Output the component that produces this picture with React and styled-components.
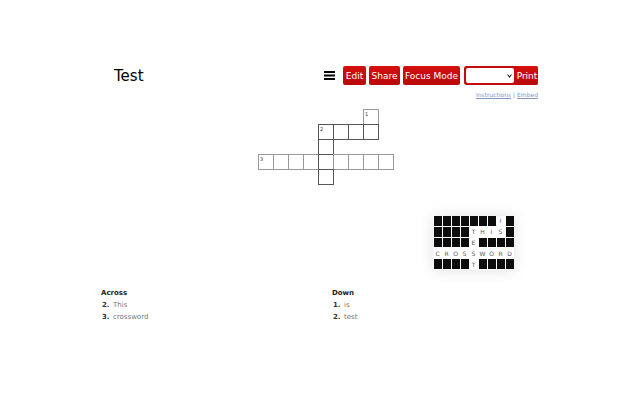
import React from "react"
import styled, {createGlobalStyle} from "styled-components"

const GlobalStyle = createGlobalStyle`
    html, body {
        margin: 0;
        background: #fff;
        font-family: "DejaVu Sans", Verdana, sans-serif;
    }
`;

const Page = styled.div`
    box-sizing: border-box;
    width: 640px;
    height: 400px;
    padding-top: 66px;
    overflow: hidden;
`;

const Header = styled.div`
    display: flex;
    align-items: center;
    height: 19px;
    padding: 0 102px 0 114px;
`;

const Title = styled.h1`
    margin: 0;
    font-size: 15px;
    font-weight: 400;
    color: #000;
    margin-right: auto;
`;

const Burger = styled.svg`
    width: 11px;
    height: 9px;
    margin-right: 8px;
`;

const Button = styled.button`
    box-sizing: border-box;
    height: 19px;
    width: ${p => p.$w}px;
    margin-right: ${p => p.$gap || 3}px;
    padding: 0;
    border: 0;
    border-radius: 2px;
    background: linear-gradient(#d40f0f, #b80a0a);
    color: #fff;
    font: 9px "DejaVu Sans", Verdana, sans-serif;
`;

const PrintGroup = styled.div`
    position: relative;
    display: flex;
    height: 19px;
    border-radius: 3px;
    background: #c40c0c;
`;

const Picker = styled.select`
    box-sizing: border-box;
    appearance: none;
    width: 52px;
    height: 19px;
    padding: 0;
    border: 2px solid #c40c0c;
    border-radius: 4px;
    background: #fff;
    font-size: 8px;
`;

const PickerArrow = styled.svg`
    position: absolute;
    top: 8px;
    left: 43px;
    width: 5px;
    height: 4px;
    pointer-events: none;
`;

const PrintButton = styled(Button)`
    margin: 0;
    border-radius: 0 2px 2px 0;
`;

const Links = styled.div`
    height: 9px;
    margin-top: 5px;
    padding-right: 102px;
    text-align: right;
    font-size: 6px;
    line-height: 9px;
    color: #888;
`;

const DocLink = styled.a`
    color: #8598c2;
    text-decoration: underline;
`;

const Board = styled.div`
    display: grid;
    grid-template-columns: repeat(9, 15px);
    grid-auto-rows: 15px;
    width: 136px;
    margin: 10px 0 0 258px;
`;

const Cell = styled.div`
    position: relative;
    box-sizing: border-box;
    width: 16px;
    height: 16px;
    grid-column: ${p => p.$col + 1};
    grid-row: ${p => p.$row + 1};
    border: 1px solid ${p => p.$dark ? "#555" : "#999"};
`;

const CellNumber = styled.span`
    position: absolute;
    top: 1px;
    left: 1px;
    font-size: 5px;
    line-height: 6px;
    color: #333;
`;

const MiniRow = styled.div`
    display: flex;
    justify-content: flex-end;
    height: 54px;
    margin-top: 32px;
    padding-right: 126px;
`;

const Mini = styled.div`
    display: grid;
    grid-template-columns: repeat(9, 9px);
    grid-auto-rows: 10.8px;
    box-shadow: 0 0 14px rgba(0, 0, 0, 0.12);
`;

const MiniCell = styled.div`
    display: flex;
    align-items: center;
    justify-content: center;
    margin: 0 ${p => p.$filled ? "0.5px" : "0"} 1px;
    background: ${p => p.$filled ? "#0c0c0c" : "#fff"};
    font-size: 6px;
    color: #555;
`;

const Clues = styled.div`
    display: flex;
    margin-top: 17px;
    padding-left: 101px;
`;

const ClueColumn = styled.div`
    width: 231px;
`;

const ClueHeading = styled.div`
    height: 12px;
    font-size: 7px;
    line-height: 12px;
    font-weight: 700;
    color: #222;
`;

const ClueRow = styled.div`
    display: flex;
    height: 12px;
    padding-left: 1px;
    font-size: 7px;
    line-height: 12px;
    color: #777;
`;

const ClueNumber = styled.span`
    width: 11px;
    font-weight: 700;
    color: #333;
`;

const cells = [
    [0, 7, "1"],
    [1, 4, "2"], [1, 5], [1, 6], [1, 7],
    [2, 4],
    [3, 0, "3"], [3, 1], [3, 2], [3, 3], [3, 4], [3, 5], [3, 6], [3, 7], [3, 8],
    [4, 4],
];

const miniRows = [
    "#######I#",
    "####THIS#",
    "####E####",
    "CROSSWORD",
    "####T####",
];

const App = () => {
    return (
        <Page>
            <GlobalStyle/>
            <Header>
                <Title>Test</Title>
                <Burger viewBox="0 0 11 9">
                    <path d="M0 1h11M0 4.5h11M0 8h11" stroke="#000" strokeWidth="2"/>
                </Burger>
                <Button $w={23}>Edit</Button>
                <Button $w={31}>Share</Button>
                <Button $w={57} $gap={4}>Focus Mode</Button>
                <PrintGroup>
                    <Picker><option></option></Picker>
                    <PickerArrow viewBox="0 0 5 4">
                        <path d="M0.5 0.5L2.5 3L4.5 0.5" fill="none" stroke="#222" strokeWidth="1.1"/>
                    </PickerArrow>
                    <PrintButton $w={22}>Print</PrintButton>
                </PrintGroup>
            </Header>
            <Links><DocLink>Instructions</DocLink> | <DocLink>Embed</DocLink></Links>
            <Board>
                {cells.map(([row, col, num]) => (
                    <Cell key={row + "-" + col} $row={row} $col={col} $dark={col === 4 || row === 1}>
                        {num && <CellNumber>{num}</CellNumber>}
                    </Cell>
                ))}
            </Board>
            <MiniRow>
                <Mini>
                    {miniRows.join("").split("").map((ch, i) => (
                        <MiniCell key={i} $filled={ch === "#"}>{ch === "#" ? "" : ch}</MiniCell>
                    ))}
                </Mini>
            </MiniRow>
            <Clues>
                <ClueColumn>
                    <ClueHeading>Across</ClueHeading>
                    <ClueRow><ClueNumber>2.</ClueNumber>This</ClueRow>
                    <ClueRow><ClueNumber>3.</ClueNumber>crossword</ClueRow>
                </ClueColumn>
                <ClueColumn>
                    <ClueHeading>Down</ClueHeading>
                    <ClueRow><ClueNumber>1.</ClueNumber>is</ClueRow>
                    <ClueRow><ClueNumber>2.</ClueNumber>test</ClueRow>
                </ClueColumn>
            </Clues>
        </Page>
    )
}

export default App;
